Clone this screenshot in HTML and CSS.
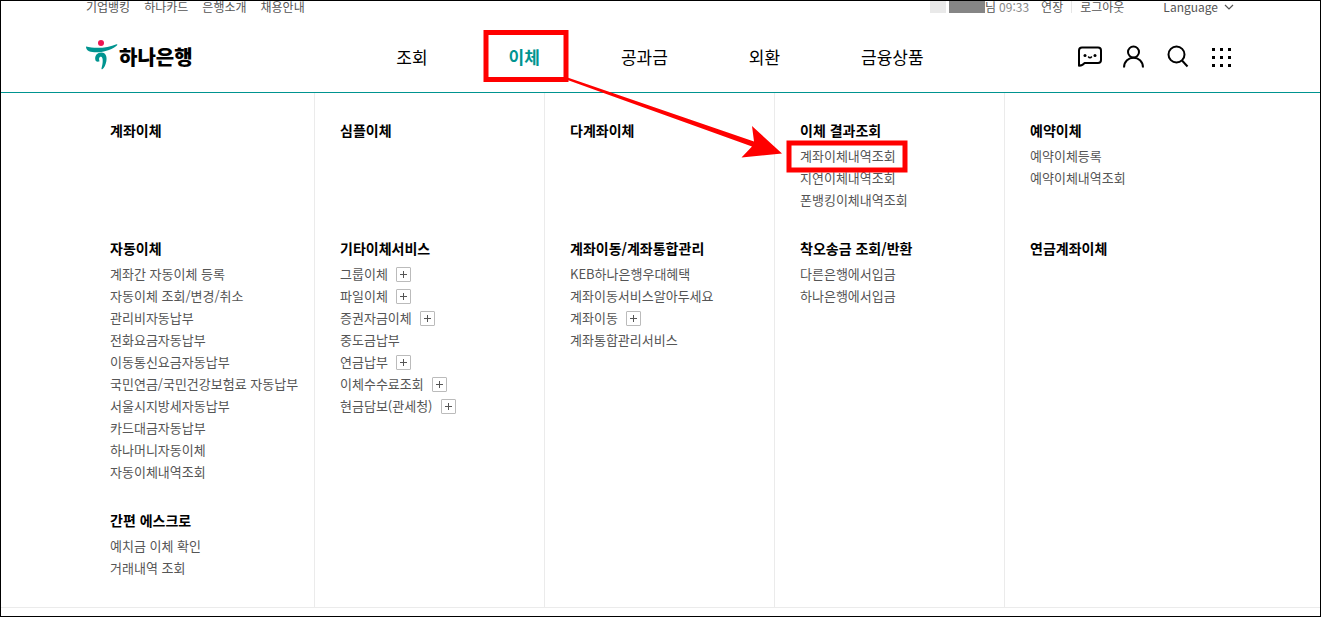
FILE: index.html
```
<!DOCTYPE html>
<html lang="ko">
<head>
  <meta charset="UTF-8">
  <meta name="viewport" content="width=device-width, initial-scale=1.0">
  <title>하나은행</title>
  <link rel="stylesheet" href="styles.css">
</head>
<body>
  <div class="page">
    <header class="header">
      <div class="inner">
        <!-- Utility links -->
        <div class="util">
          <ul class="util-list">
            <li><a href="#">기업뱅킹</a></li>
            <li><a href="#">하나카드</a></li>
            <li><a href="#">은행소개</a></li>
            <li><a href="#">채용안내</a></li>
          </ul>
          <div class="user">
            <span class="mask mask-light"></span>
            <span class="mask"></span>
            <span>님</span>
            <span class="timer">09:33</span>
            <button type="button" class="extend">연장</button>
            <a href="#" class="logout">로그아웃</a>
            <button type="button" class="language">Language
              <svg width="10" height="6" viewBox="0 0 10 6" aria-hidden="true"><path d="M1 1l4 4 4-4" fill="none" stroke="#555" stroke-width="1.2"/></svg>
            </button>
          </div>
        </div>

        <!-- Logo, main menu, icons -->
        <div class="gnb">
          <a href="#" class="logo">
            <svg width="32" height="30" viewBox="0 0 32 30" aria-hidden="true">
              <circle cx="15" cy="3" r="3" fill="#ed1651"/>
              <path d="M0 6.500C9 9 22 8 30.500 4.200C32 4 31.500 5.200 30 6.200C22 12 10 13.500 3 11.200C.5 10 0 8 0 6.500Z" fill="#009490"/>
              <path d="M9.500 20.500C8 15 12 12.300 15.500 12.500C20 12.700 21.300 17 20.300 21.500C19.500 25 18.300 28 16.300 29.300C15.400 29.500 15.300 28.500 15.700 27.500C16.800 24 17.500 17.200 15.200 16.700C12.800 16.500 12.800 19 13.600 21.300C12 22 10.500 21.800 9.500 20.500Z" fill="#009490"/>
            </svg>
            <span>하나은행</span>
          </a>
          <nav class="main-nav">
            <a href="#">조회</a>
            <a href="#" class="active">이체</a>
            <a href="#">공과금</a>
            <a href="#">외환</a>
            <a href="#">금융상품</a>
          </nav>
          <div class="tools">
            <button type="button" aria-label="챗봇">
              <svg width="24" height="24" viewBox="0 0 24 24"><path d="M4 2.500H20Q23 2.500 23 5.500V15Q23 18 20 18H6.500Q5 20.500 1 20.800V5.500Q1 2.500 4 2.500Z" fill="none" stroke="#000" stroke-width="2" stroke-linejoin="round"/><circle cx="7" cy="10.500" r="1.500"/><circle cx="17" cy="10.500" r="1.500"/><path d="M10.200 11.500q1.800 2.500 3.600 0" fill="none" stroke="#000" stroke-width="1.500"/></svg>
            </button>
            <button type="button" aria-label="마이하나">
              <svg width="24" height="24" viewBox="0 0 24 24"><g fill="none" stroke="#000" stroke-width="2"><circle cx="11.500" cy="7" r="5.500"/><path d="M2 22.500C2 9.500 21 9.500 21 22.500"/></g></svg>
            </button>
            <button type="button" aria-label="검색">
              <svg width="24" height="24" viewBox="0 0 24 24"><g fill="none" stroke="#000" stroke-width="2"><circle cx="10.500" cy="9.500" r="8"/><path d="M16 15.500L21.500 21.500"/></g></svg>
            </button>
            <button type="button" aria-label="전체메뉴">
              <svg width="24" height="24" viewBox="0 0 24 24"><path d="M2 3h3v3H2zM10 3h3v3h-3zM18 3h3v3h-3zM2 11h3v3H2zM10 11h3v3h-3zM18 11h3v3h-3zM2 19h3v3H2zM10 19h3v3h-3zM18 19h3v3h-3z"/></svg>
            </button>
          </div>
        </div>
      </div>
    </header>

    <!-- 이체 sub menu -->
    <div class="submenu">
      <div class="inner menu-grid">
        <section class="cell"><h2>계좌이체</h2></section>
        <section class="cell"><h2>심플이체</h2></section>
        <section class="cell"><h2>다계좌이체</h2></section>
        <section class="cell">
          <h2>이체 결과조회</h2>
          <ul>
            <li><a href="#">계좌이체내역조회</a></li>
            <li><a href="#">지연이체내역조회</a></li>
            <li><a href="#">폰뱅킹이체내역조회</a></li>
          </ul>
        </section>
        <section class="cell">
          <h2>예약이체</h2>
          <ul>
            <li><a href="#">예약이체등록</a></li>
            <li><a href="#">예약이체내역조회</a></li>
          </ul>
        </section>

        <section class="cell">
          <h2>자동이체</h2>
          <ul>
            <li><a href="#">계좌간 자동이체 등록</a></li>
            <li><a href="#">자동이체 조회/변경/취소</a></li>
            <li><a href="#">관리비자동납부</a></li>
            <li><a href="#">전화요금자동납부</a></li>
            <li><a href="#">이동통신요금자동납부</a></li>
            <li><a href="#">국민연금/국민건강보험료 자동납부</a></li>
            <li><a href="#">서울시지방세자동납부</a></li>
            <li><a href="#">카드대금자동납부</a></li>
            <li><a href="#">하나머니자동이체</a></li>
            <li><a href="#">자동이체내역조회</a></li>
          </ul>
        </section>
        <section class="cell">
          <h2>기타이체서비스</h2>
          <ul>
            <li><a href="#">그룹이체</a><button type="button" class="plus" aria-label="펼치기"></button></li>
            <li><a href="#">파일이체</a><button type="button" class="plus" aria-label="펼치기"></button></li>
            <li><a href="#">증권자금이체</a><button type="button" class="plus" aria-label="펼치기"></button></li>
            <li><a href="#">중도금납부</a></li>
            <li><a href="#">연금납부</a><button type="button" class="plus" aria-label="펼치기"></button></li>
            <li><a href="#">이체수수료조회</a><button type="button" class="plus" aria-label="펼치기"></button></li>
            <li><a href="#">현금담보(관세청)</a><button type="button" class="plus" aria-label="펼치기"></button></li>
          </ul>
        </section>
        <section class="cell">
          <h2>계좌이동/계좌통합관리</h2>
          <ul>
            <li><a href="#">KEB하나은행우대혜택</a></li>
            <li><a href="#">계좌이동서비스알아두세요</a></li>
            <li><a href="#">계좌이동</a><button type="button" class="plus" aria-label="펼치기"></button></li>
            <li><a href="#">계좌통합관리서비스</a></li>
          </ul>
        </section>
        <section class="cell">
          <h2>착오송금 조회/반환</h2>
          <ul>
            <li><a href="#">다른은행에서입금</a></li>
            <li><a href="#">하나은행에서입금</a></li>
          </ul>
        </section>
        <section class="cell"><h2>연금계좌이체</h2></section>

        <section class="cell">
          <h2>간편 에스크로</h2>
          <ul>
            <li><a href="#">예치금 이체 확인</a></li>
            <li><a href="#">거래내역 조회</a></li>
          </ul>
        </section>
        <div class="cell"></div>
        <div class="cell"></div>
        <div class="cell"></div>
        <div class="cell"></div>
      </div>
    </div>

    <!-- Guide marks over the menu -->
    <div class="guide">
      <svg width="1151" height="200" viewBox="85 1 1151 200" aria-hidden="true">
        <g fill="none" stroke="#f00" stroke-width="5">
          <rect x="485.500" y="32.500" width="80" height="47"/>
          <rect x="788.500" y="143" width="116" height="27"/>
        </g>
        <path d="M567 77.500L753.500 141.500L751.500 126L781.500 153.500L741 157.500L751.500 146.500L567 80Z" fill="#f00"/>
      </svg>
    </div>
  </div>
</body>
</html>
```
FILE: styles.css
```
* {
  box-sizing: border-box;
}

body {
  margin: 0;
  font-family: "Noto Sans CJK KR", "Noto Sans", sans-serif;
  font-size: 13px;
  color: #555;
  background-color: #fff;
}

ul {
  list-style: none;
  margin: 0;
  padding: 0;
}

a {
  color: inherit;
  text-decoration: none;
}

button {
  font: inherit;
  color: inherit;
  background: none;
  border: none;
  padding: 0;
  cursor: pointer;
}

svg {
  display: block;
}

.page {
  position: relative;
  min-height: 100vh;
  border: 1px solid #000;
}

.inner {
  max-width: 1151px;
  margin: 0 auto;
}

/* Header */
.header {
  border-bottom: 1px solid #009490;
}

.util {
  display: flex;
  justify-content: space-between;
  height: 12px;
  padding-left: 1px;
  font-size: 12px;
  line-height: 12px;
}

.util-list {
  display: flex;
  gap: 14px;
}

.user {
  display: flex;
  align-items: center;
}

.mask {
  width: 36px;
  height: 12px;
  background-color: #858585;
}

.mask-light {
  width: 16px;
  margin-right: 3px;
  background-color: #e9e9e9;
}

.timer {
  margin-left: 3px;
  color: #888;
}

.extend {
  margin-left: 12px;
}

.logout {
  margin-left: 8px;
  padding-left: 8px;
  border-left: 1px solid #e5e5e5;
}

.language {
  display: flex;
  align-items: center;
  gap: 6px;
  margin: 0 2px 0 39px;
}

.gnb {
  display: grid;
  grid-template-columns: 1fr auto 1fr;
  align-items: center;
  height: 79px;
  padding: 8px 2px 0 1px;
}

.logo {
  display: flex;
  align-items: center;
  gap: 1px;
  font-size: 20px;
  font-weight: 900;
  line-height: 30px;
  color: #000;
}

.logo svg {
  margin-bottom: 4px;
}

.main-nav {
  display: flex;
  gap: 81px;
  font-size: 17px;
  color: #000;
}

.main-nav .active {
  font-weight: bold;
  color: #009490;
}

.tools {
  display: flex;
  justify-content: flex-end;
  gap: 20px;
}

/* Sub menu */
.submenu {
  border-bottom: 1px solid #ebebeb;
}

.menu-grid {
  display: grid;
  grid-template-columns: repeat(4, 230px) 1fr;
}

.cell {
  padding: 0 0 24px 25px;
  border-right: 1px solid #ebebeb;
}

.cell:nth-child(5n) {
  border-right: none;
}

.cell:nth-child(-n+5) {
  padding-top: 24px;
}

.cell:nth-child(n+11) {
  padding-bottom: 28px;
}

.cell h2 {
  margin: 0 0 2px;
  font-size: 14px;
  font-weight: bold;
  line-height: 26px;
  color: #000;
}

.cell li {
  display: flex;
  align-items: center;
  height: 22px;
  line-height: 22px;
  white-space: nowrap;
}

.plus {
  width: 15px;
  height: 15px;
  margin-left: 8px;
  border: 1px solid #bbb;
  border-radius: 1px;
  background:
    linear-gradient(#555, #555) center / 7px 1px no-repeat,
    linear-gradient(#555, #555) center / 1px 7px no-repeat;
}

/* Red boxes and arrow */
.guide {
  position: absolute;
  top: 0;
  left: 50%;
  transform: translateX(-50%);
  pointer-events: none;
}
```
